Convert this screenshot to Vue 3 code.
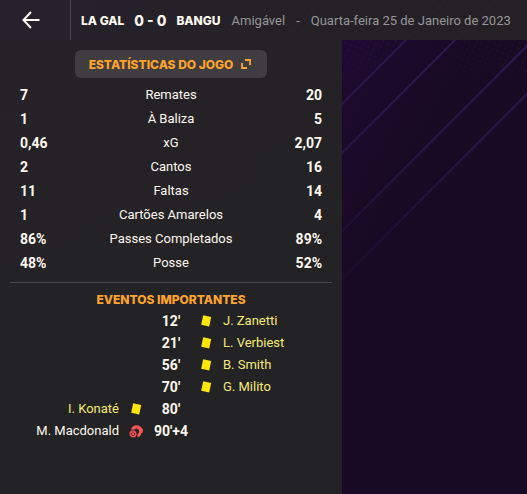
<script setup>
const stats = [
  { home: '7', label: 'Remates', away: '20' },
  { home: '1', label: 'À Baliza', away: '5' },
  { home: '0,46', label: 'xG', away: '2,07' },
  { home: '2', label: 'Cantos', away: '16' },
  { home: '11', label: 'Faltas', away: '14' },
  { home: '1', label: 'Cartões Amarelos', away: '4' },
  { home: '86%', label: 'Passes Completados', away: '89%' },
  { home: '48%', label: 'Posse', away: '52%' },
]

const events = [
  { minute: "12'", side: 'away', type: 'card', player: 'J. Zanetti' },
  { minute: "21'", side: 'away', type: 'card', player: 'L. Verbiest' },
  { minute: "56'", side: 'away', type: 'card', player: 'B. Smith' },
  { minute: "70'", side: 'away', type: 'card', player: 'G. Milito' },
  { minute: "80'", side: 'home', type: 'card', player: 'I. Konaté' },
  { minute: "90'+4", side: 'home', type: 'missed', player: 'M. Macdonald' },
]
</script>

<template>
  <div class="page">
    <svg class="backdrop" aria-hidden="true">
      <defs>
        <linearGradient id="tint" x1="0" y1="0" x2="1" y2="0.5">
          <stop offset="0" stop-color="#380a5c" />
          <stop offset="0.55" stop-color="#1e0a30" />
          <stop offset="0.75" stop-color="#190a24" />
        </linearGradient>
        <linearGradient id="fade" x1="0" y1="0" x2="0" y2="300" gradientUnits="userSpaceOnUse">
          <stop offset="0" stop-color="#2f1b55" />
          <stop offset="0.5" stop-color="#281546" />
          <stop offset="1" stop-color="#1a0a26" />
        </linearGradient>
        <linearGradient id="dotfade" x1="0" y1="0" x2="0" y2="110" gradientUnits="userSpaceOnUse">
          <stop offset="0.3" stop-color="#fff" />
          <stop offset="1" stop-color="#000" />
        </linearGradient>
        <pattern id="dots" width="8" height="8" patternUnits="userSpaceOnUse" patternTransform="rotate(-20)">
          <circle cx="2" cy="2" r="0.9" fill="#35125a" />
          <circle cx="6" cy="6" r="0.9" fill="#35125a" />
        </pattern>
        <mask id="dotmask">
          <rect width="100%" height="110" fill="url(#dotfade)" />
        </mask>
      </defs>
      <rect width="100%" height="100%" fill="url(#tint)" />
      <g mask="url(#dotmask)" fill="url(#dots)">
        <path d="M0 0H446L336 110H0Z" opacity="0.6" />
        <path d="M495 0H1600V110H385Z" opacity="0.45" />
      </g>
      <g stroke="url(#fade)" stroke-width="2" fill="none">
        <path d="M146 0L0 146M194 0L0 194M322 0L0 322M446 0L142 304M495 0L191 304M573 0L269 304M621 0L317 304" />
      </g>
    </svg>

    <header class="topbar">
      <button class="back" type="button" aria-label="Voltar">
        <svg width="18" height="18" viewBox="0 0 18 18" fill="none" stroke="#fff8f0" stroke-width="2">
          <path d="M17.5 9H1.5M9 1L1.5 9L9 17" />
        </svg>
      </button>
      <div class="match">
        <h1 class="score">
          <span>LA GAL</span>
          <span class="goals">0 - 0</span>
          <span>BANGU</span>
        </h1>
        <p class="info">
          <span>Amigável</span>
          <span>-</span>
          <span>Quarta-feira 25 de Janeiro de 2023</span>
        </p>
      </div>
    </header>

    <main class="panel">
      <button class="stats-link" type="button">
        <span>ESTATÍSTICAS DO JOGO</span>
        <svg width="10" height="10" viewBox="0 0 10 10" fill="none" stroke="currentColor" stroke-width="1.8">
          <path d="M4 1H9V6M1 4V9H6" />
        </svg>
      </button>

      <table class="stats">
        <tbody>
          <tr v-for="s in stats" :key="s.label">
            <td class="home">{{ s.home }}</td>
            <th scope="row">{{ s.label }}</th>
            <td class="away">{{ s.away }}</td>
          </tr>
        </tbody>
      </table>

      <section class="events">
        <h2>EVENTOS IMPORTANTES</h2>
        <ul>
          <li v-for="e in events" :key="e.minute" :class="[e.side, e.type]">
            <span class="minute">{{ e.minute }}</span>
            <svg v-if="e.type === 'card'" class="icon" width="14" height="14" viewBox="0 0 14 14">
              <path d="M4.2 1.2L12.2 3L10.2 12.6L2.2 10.8Z" fill="#ffe60a" />
            </svg>
            <svg v-else class="icon" width="14" height="14" viewBox="0 0 14 14">
              <path d="M2 5.6C2.6 3 4.8 1.2 7.6 1.2C9.6 1.2 11.2 2 12 3.2L13.8 5.2V8.2L12.4 9.2C12 11 11 12.4 9.6 13L8.4 12.4V10.4L10.2 8.2L9.6 5.6L7.4 4.4L5 5.8Z" fill="#ff5558" />
              <circle cx="4" cy="9.8" r="3" fill="none" stroke="#ff5558" stroke-width="1.2" />
              <path d="M2.2 8L5.8 11.6M5.8 8L2.2 11.6" stroke="#ff5558" stroke-width="1.1" />
            </svg>
            <span class="player">{{ e.player }}</span>
          </li>
        </ul>
      </section>
    </main>
  </div>
</template>

<style>
body {
  margin: 0;
  background: #190a24;
}
</style>

<style scoped>
.page {
  position: relative;
  min-height: 100vh;
  display: flex;
  flex-direction: column;
  font-family: Roboto, "Liberation Sans", sans-serif;
  font-size: 13px;
  color: #fff8f0;
}

.backdrop {
  position: absolute;
  inset: 0;
  width: 100%;
  height: 100%;
}

.topbar,
.panel {
  position: relative;
  background: rgba(36, 36, 36, 0.88);
}

.topbar {
  display: flex;
  height: 40px;
}

.back {
  width: 71px;
  flex: none;
  display: flex;
  align-items: center;
  justify-content: center;
  padding: 0 8px 0 0;
  border: 0;
  border-right: 1px solid #4d4852;
  background: none;
  cursor: pointer;
}

.match {
  display: flex;
  align-items: center;
  gap: 11px;
  padding: 0 10px;
  white-space: nowrap;
}

.score {
  display: flex;
  align-items: center;
  gap: 10px;
  margin: 0;
  font-family: Inter, "Liberation Sans", sans-serif;
  font-size: 12px;
  font-weight: 800;
}

.goals {
  font-size: 14px;
}

.info {
  display: flex;
  gap: 11px;
  margin: 0;
  color: #98959a;
}

.panel {
  flex: 1;
  width: 64.9%;
  box-sizing: border-box;
  display: flex;
  flex-direction: column;
  padding: 10px;
  background: linear-gradient(rgba(36, 36, 36, 0.9), rgba(35, 35, 36, 0.98) 70%);
}

.stats-link {
  align-self: center;
  display: flex;
  align-items: center;
  gap: 8px;
  height: 28px;
  padding: 0 16px 0 14px;
  border: 0;
  border-radius: 6px;
  background: #3f3d3f;
  color: #ffa42b;
  cursor: pointer;
}

.stats-link,
.events h2 {
  font-family: Inter, "Liberation Sans", sans-serif;
  font-size: 12px;
  font-weight: 800;
}

.stats {
  width: 100%;
  margin-top: 5px;
  border-collapse: collapse;
}

.stats td,
.stats th {
  height: 24px;
  padding: 0 10px;
  line-height: 24px;
  font-weight: 400;
  text-align: center;
}

.stats td {
  width: 20%;
  font-size: 14px;
  font-weight: 700;
}

.stats .home {
  text-align: left;
}

.stats .away {
  text-align: right;
}

.events {
  margin-top: 7px;
  border-top: 1px solid #4a484b;
}

.events h2 {
  margin: 9px 0 2px;
  line-height: 16px;
  color: #ffa42b;
  text-align: center;
}

.events ul {
  margin: 0;
  padding: 0;
  list-style: none;
}

.events li {
  display: grid;
  grid-template-columns: 1fr 34px 36px 34px 1fr;
  align-items: center;
  justify-items: center;
  height: 22px;
  line-height: 22px;
  white-space: nowrap;
}

.events li > * {
  grid-row: 1;
}

.minute {
  grid-column: 3;
  font-size: 14px;
  font-weight: 700;
}

.home .icon {
  grid-column: 2;
}

.home .player {
  grid-column: 1;
  justify-self: end;
}

.away .icon {
  grid-column: 4;
}

.away .player {
  grid-column: 5;
  justify-self: start;
}

.card .player {
  color: #f5ea78;
}
</style>
